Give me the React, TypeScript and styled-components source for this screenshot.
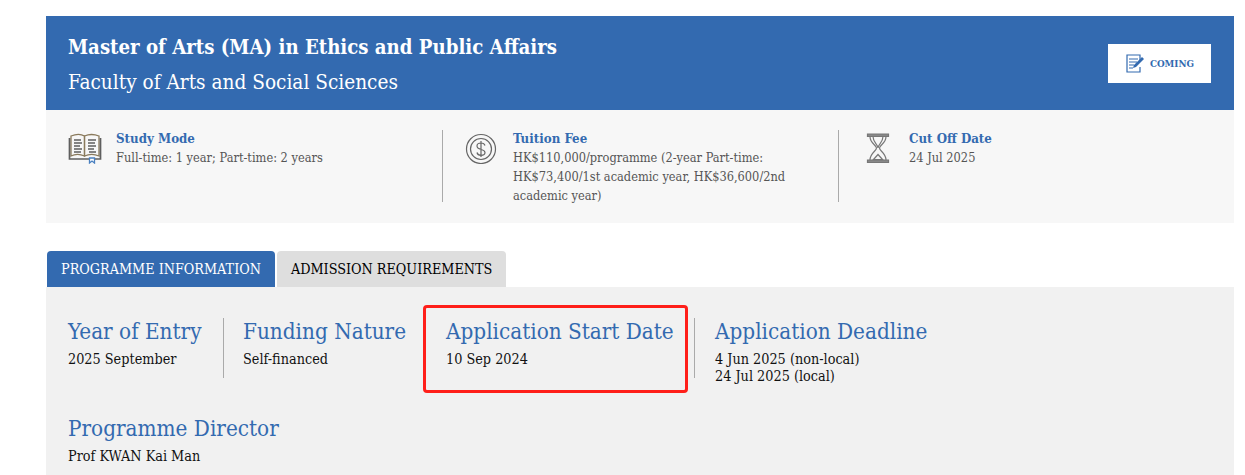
import styled, { createGlobalStyle } from 'styled-components';

const slab = `"DejaVu Serif Condensed", "DejaVu Serif", "Liberation Serif", serif`;
const blue = '#336ab0';

const Global = createGlobalStyle`
  html, body { margin: 0; padding: 0; background: #fff; overflow: hidden; }
  body { font-family: ${slab}; }
`;

const Page = styled.div`
  position: relative;
  width: 1245px;
  height: 475px;
  padding: 16px 11px 0 46px;
  box-sizing: border-box;
  overflow: hidden;
`;

const Header = styled.header`
  height: 94px;
  box-sizing: border-box;
  background: ${blue};
  color: #fff;
  padding: 1px 23px 0 22px;
  display: flex;
  align-items: center;
  justify-content: space-between;
`;

const Title = styled.h1`
  margin: 2px 0 8px;
  font-size: 20.2px;
  line-height: 27px;
  font-weight: 700;
`;

const Faculty = styled.div`
  font-size: 20.6px;
  line-height: 26px;
`;

const ComingButton = styled.div`
  width: 103px;
  height: 39px;
  margin-top: -1px;
  background: #fff;
  color: ${blue};
  display: flex;
  align-items: center;
  justify-content: center;
  gap: 5px;
  font-size: 9.8px;
  font-weight: 700;
`;

const InfoBar = styled.section`
  height: 113px;
  background: #f7f7f7;
  padding-top: 20px;
  box-sizing: border-box;
  display: flex;
`;

const InfoItem = styled.div<{ $width: number; $divider?: boolean }>`
  width: ${p => p.$width}px;
  height: 72px;
  box-sizing: border-box;
  padding-left: 22px;
  display: flex;
  gap: 14px;
  border-right: ${p => (p.$divider ? '1px solid #aaa' : 'none')};
`;

const InfoIcon = styled.svg`
  flex: none;
  width: 34px;
  height: 34px;
`;

const InfoTitle = styled.div`
  color: ${blue};
  font-size: 13.2px;
  line-height: 17px;
  font-weight: 700;
`;

const InfoText = styled.div`
  color: #555;
  font-size: 12.7px;
  line-height: 19px;
  margin-top: 1px;
  white-space: nowrap;
`;

const Tabs = styled.nav`
  display: flex;
  gap: 2px;
  margin: 28px 0 0 1px;
  height: 36px;
`;

const Tab = styled.div<{ $active?: boolean }>`
  padding: 0 14px;
  display: flex;
  align-items: center;
  font-size: 14.25px;
  border-radius: 4px 4px 0 0;
  background: ${p => (p.$active ? blue : '#dedede')};
  color: ${p => (p.$active ? '#fff' : '#000')};
`;

const Panel = styled.section`
  background: #f1f1f1;
  height: 188px;
  padding: 31px 22px 0;
  box-sizing: border-box;
`;

const FactRow = styled.div`
  display: flex;
  align-items: flex-start;
  margin-bottom: 30px;
`;

const Fact = styled.div<{ $last?: boolean; $width: number }>`
  width: ${p => p.$width}px;
  flex: none;
  box-sizing: border-box;
  min-height: 60px;
  border-right: ${p => (p.$last ? 'none' : '1px solid #aaa')};
`;

const FactTitle = styled.div`
  color: ${blue};
  font-size: 22.3px;
  line-height: 26px;
  margin-bottom: 7px;
  white-space: nowrap;
`;

const FactText = styled.div`
  color: #111;
  font-size: 14.3px;
  line-height: 17px;
  white-space: nowrap;
`;

const Gutter = styled.div<{ $width: number }>`
  width: ${p => p.$width}px;
  flex: none;
`;

const Highlight = styled.div`
  position: absolute;
  left: 423px;
  top: 305px;
  width: 265px;
  height: 88px;
  box-sizing: border-box;
  border: 3px solid #ff1f1a;
  border-radius: 4px;
`;

const BookIcon = () => (
  <InfoIcon viewBox="0 0 34 34" fill="none" stroke="#5f5f5f" strokeWidth="1.3">
    <path d="M3 6c5-2 10-2 13.500 0v20C12 24 7 24 3 26z" stroke="#8a7a5c" />
    <path d="M31 6c-5-2-10-2-14.500 0v20c4.500-2 10-2 14.500 0z" stroke="#8a7a5c" />
    <path d="M1.500 8v21h31V8" strokeWidth="1.700" />
    <path d="M6 10h7M6 13h8M6 16h6M6 19h8M6 22h7M20 10h8M20 13h7M20 16h8M20 19h6M21 22h7" strokeWidth="1.300" />
    <path d="M21.500 28v5l2.500-2 2.500 2v-5z" fill="#fff" stroke="#4a80c0" />
  </InfoIcon>
);

const CoinIcon = () => (
  <InfoIcon viewBox="1 -2 34 34" fill="none" stroke="#666" strokeWidth="1.200">
    <circle cx="17" cy="17" r="14.500" />
    <circle cx="17" cy="17" r="10.500" />
    <path d="M21 13.500c-.5-1.800-2-2.500-4-2.500-2.500 0-4 1.200-4 3 0 4.500 8 2.500 8 6.500 0 1.800-1.600 2.800-4 2.800-2.200 0-3.600-1-4-2.800M17 9v16" />
  </InfoIcon>
);

const HourglassIcon = () => (
  <InfoIcon viewBox="0 0 34 34" fill="none" stroke="#777" strokeWidth="1.200">
    <path d="M6.500 4h21v2.500h-21zM6.500 30h21v2.500h-21z" fill="#888" />
    <path d="M9 6.500c0 7 6.500 8.500 6.500 11.500S9 23 9 30M25 6.500c0 7-6.500 8.500-6.500 11.500S25 23 25 30" />
    <path d="M12 6.500c0 6 5 8 5 11.500 0-3.500 5-5.500 5-11.500M12.500 29.500l4.500-5 4.500 5z" />
  </InfoIcon>
);

const NoteIcon = () => (
  <svg width="20" height="20" viewBox="0 0 20 20" fill="none" stroke={blue} strokeWidth="1.200">
    <path d="M15 7V2H2v17h13v-5" />
    <path d="M4 6h9M4 9h8M4 12h5M4 15h4" />
    <path d="M8 15l1-3 8-8 2 2-8 8z" fill={blue} stroke="none" />
  </svg>
);

export default function App() {
  return (
    <Page>
      <Global />
      <Header>
        <div>
          <Title>Master of Arts (MA) in Ethics and Public Affairs</Title>
          <Faculty>Faculty of Arts and Social Sciences</Faculty>
        </div>
        <ComingButton>
          <NoteIcon />
          COMING
        </ComingButton>
      </Header>

      <InfoBar>
        <InfoItem $width={397} $divider>
          <BookIcon />
          <div>
            <InfoTitle>Study Mode</InfoTitle>
            <InfoText>Full-time: 1 year; Part-time: 2 years</InfoText>
          </div>
        </InfoItem>
        <InfoItem $width={396} $divider>
          <CoinIcon />
          <div>
            <InfoTitle>Tuition Fee</InfoTitle>
            <InfoText>
              HK$110,000/programme (2-year Part-time:
              <br />
              HK$73,400/1st academic year, HK$36,600/2nd
              <br />
              academic year)
            </InfoText>
          </div>
        </InfoItem>
        <InfoItem $width={300}>
          <HourglassIcon />
          <div>
            <InfoTitle>Cut Off Date</InfoTitle>
            <InfoText>24 Jul 2025</InfoText>
          </div>
        </InfoItem>
      </InfoBar>

      <Tabs>
        <Tab $active>PROGRAMME INFORMATION</Tab>
        <Tab>ADMISSION REQUIREMENTS</Tab>
      </Tabs>

      <Panel>
        <FactRow>
          <Fact $width={156}>
            <FactTitle>Year of Entry</FactTitle>
            <FactText>2025 September</FactText>
          </Fact>
          <Gutter $width={19} />
          <Fact $width={203} $last>
            <FactTitle>Funding Nature</FactTitle>
            <FactText>Self-financed</FactText>
          </Fact>
          <Fact $width={249}>
            <FactTitle>Application Start Date</FactTitle>
            <FactText>10 Sep 2024</FactText>
          </Fact>
          <Gutter $width={20} />
          <Fact $width={300} $last>
            <FactTitle>Application Deadline</FactTitle>
            <FactText>
              4 Jun 2025 (non-local)
              <br />
              24 Jul 2025 (local)
            </FactText>
          </Fact>
        </FactRow>
        <FactTitle>Programme Director</FactTitle>
        <FactText>Prof KWAN Kai Man</FactText>
      </Panel>
      <Highlight />
    </Page>
  );
}
